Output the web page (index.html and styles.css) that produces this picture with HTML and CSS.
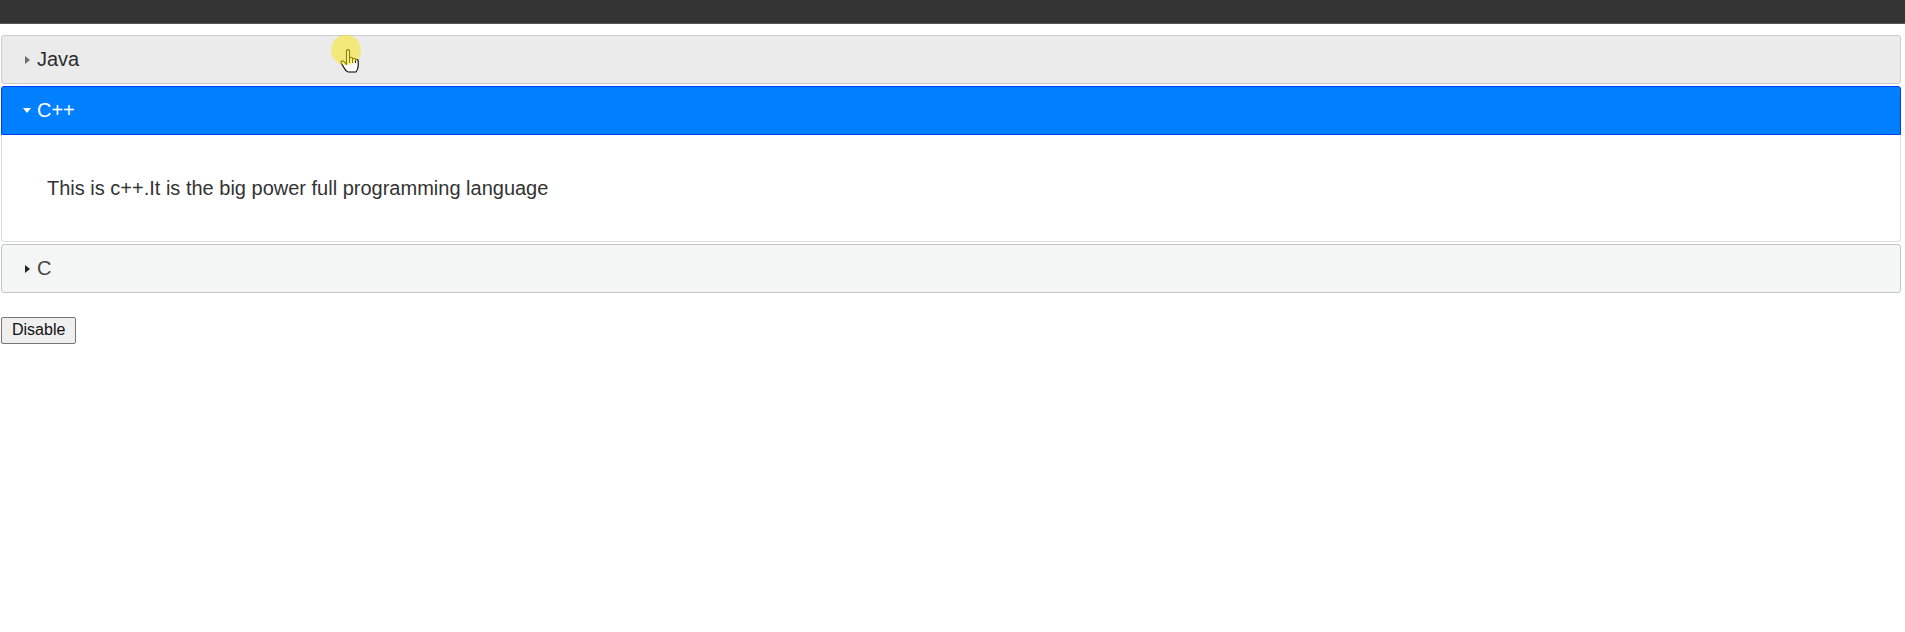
FILE: index.html
```html
<!DOCTYPE html>
<html>
<head>
<meta charset="utf-8">
<link rel="stylesheet" href="styles.css">
</head>
<body>
<div class="topbar"></div>
<div class="accordion">
  <h3 class="hdr hdr-hover"><span class="icon"><span class="tri tri-right"></span></span>Java</h3>
  <h3 class="hdr hdr-active"><span class="icon"><span class="tri tri-down"></span></span>C++</h3>
  <div class="panel"><p>This is c++.It is the big power full programming language</p></div>
  <h3 class="hdr hdr-default"><span class="icon"><span class="tri tri-right tri-dark"></span></span>C</h3>
</div>
<button class="btn">Disable</button>
<svg class="hand" width="22" height="26" viewBox="0 0 22 26"><path d="M6.5 2.2 Q6.5 0.6 8 0.6 Q9.5 0.6 9.5 2.2 V9.5 Q9.5 8.3 11 8.3 Q12.5 8.3 12.5 9.8 V10.5 Q12.5 9.3 14 9.3 Q15.5 9.3 15.5 10.8 V11.5 Q15.5 10.4 16.8 10.4 Q18.2 10.4 18.2 12 V16.5 Q18.2 20.5 16 23 H8.5 Q6.5 23 4.5 19.5 L1.2 14 Q0.6 12.4 2 11.9 Q3.3 11.5 4.6 13.2 L6.5 15.5 Z" fill="#fff" stroke="#000" stroke-width="1.1" stroke-linejoin="round"/><path d="M9.5 9.5 V14 M12.5 10.5 V14 M15.5 11.5 V14" stroke="#000" stroke-width="1" fill="none"/></svg>
<div class="dot"></div>
</body>
</html>
```
FILE: styles.css
```css
html, body {
  margin: 0;
  padding: 0;
  background: #fff;
}
body {
  font-family: "Liberation Sans", Arial, sans-serif;
  position: relative;
}
.topbar {
  height: 24px;
  background: #333333;
  border-bottom: 1px solid #555;
  box-sizing: border-box;
}
.accordion {
  margin: 11px 0 0 1px;
  width: 1900px;
}
.hdr {
  margin: 2px 0 0 0;
  padding: 12px 8px 12px 15px;
  font-size: 20px;
  font-weight: normal;
  line-height: 23px;
  border: 1px solid #c5c5c5;
  border-radius: 3px;
  display: flex;
  align-items: center;
}
.hdr:first-child { margin-top: 0; }
.hdr-hover {
  background: #ebebeb;
  border-color: #cccccc;
  color: #2b2b2b;
}
.hdr-active {
  background: #007fff;
  border-color: #003eff;
  color: #ffffff;
  border-radius: 3px 3px 0 0;
}
.hdr-default {
  background: #f4f5f5;
  border-color: #c5c5c5;
  color: #454545;
}
.icon {
  width: 20px;
  height: 20px;
  margin-right: 0;
  display: flex;
  align-items: center;
  justify-content: center;
}
.tri {
  width: 0;
  height: 0;
}
.tri-right {
  border-top: 4.5px solid transparent;
  border-bottom: 4.5px solid transparent;
  border-left: 5px solid #6e6e6e;
}
.tri-dark { border-left-color: #222; }
.tri-down {
  border-left: 4.5px solid transparent;
  border-right: 4.5px solid transparent;
  border-top: 5px solid #ffffff;
}
.panel {
  border: 1px solid #dddddd;
  border-top: 0;
  border-radius: 0 0 3px 3px;
  background: #fff;
  color: #333333;
  padding: 22px 45px 21px 45px;
  font-size: 20px;
  line-height: 23px;
}
.panel p { margin: 20px 0; }
.btn {
  display: block;
  margin: 24px 0 0 1px;
  font-family: "Liberation Sans", Arial, sans-serif;
  font-size: 16px;
  line-height: 18px;
  padding: 3px 10px 4px;
  color: #111;
  background: #efefef;
  border: 1px solid #767676;
  border-radius: 2px;
}
.hand {
  position: absolute;
  left: 340px;
  top: 49px;
}
.dot {
  position: absolute;
  left: 331px;
  top: 35px;
  width: 30px;
  height: 30px;
  border-radius: 50%;
  background: rgba(250, 230, 30, 0.55);
}
```
